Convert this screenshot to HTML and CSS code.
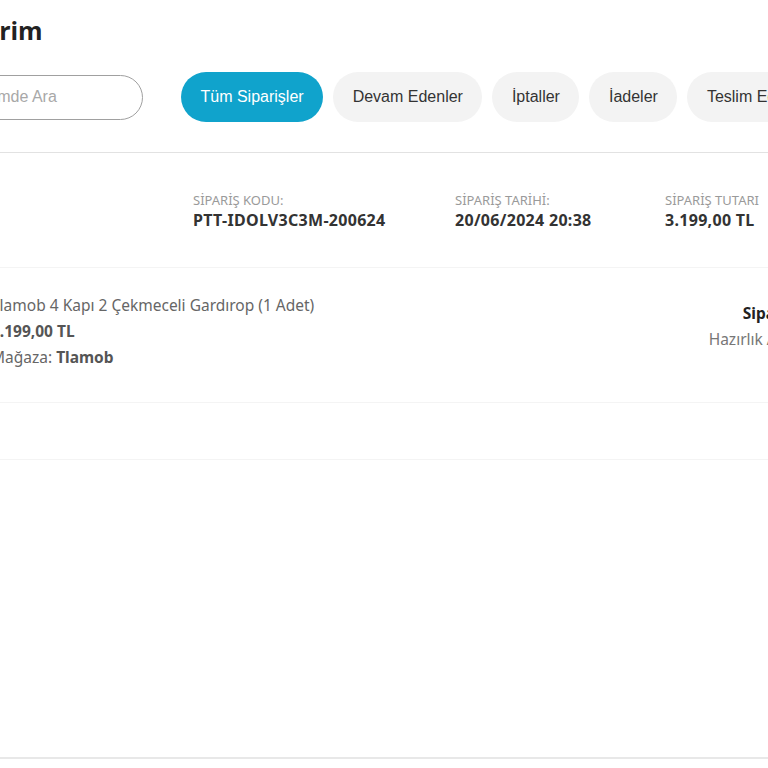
FILE: index.html
```html
<!DOCTYPE html>
<html lang="tr">
<head>
    <meta charset="UTF-8">
    <meta name="viewport" content="width=device-width, initial-scale=1.0">
    <title>Siparişlerim</title>
    <link rel="stylesheet" href="styles.css">
</head>
<body>
    <div class="page">
        <h1 class="page-title">Siparişlerim</h1>

        <div class="toolbar">
            <input class="search" type="text" placeholder="Siparişlerimde Ara">
            <div class="tabs">
                <button class="tab tab-active">Tüm Siparişler</button>
                <button class="tab">Devam Edenler</button>
                <button class="tab">İptaller</button>
                <button class="tab">İadeler</button>
                <button class="tab">Teslim Edilenler</button>
            </div>
        </div>

        <div class="order">
            <div class="order-head">
                <div class="order-field field-code">
                    <div class="order-label">Sipariş Kodu:</div>
                    <div class="order-value">PTT-IDOLV3C3M-200624</div>
                </div>
                <div class="order-field field-date">
                    <div class="order-label">Sipariş Tarihi:</div>
                    <div class="order-value">20/06/2024 20:38</div>
                </div>
                <div class="order-field">
                    <div class="order-label">Sipariş Tutarı</div>
                    <div class="order-value">3.199,00 TL</div>
                </div>
            </div>

            <div class="order-item">
                <div class="item-info">
                    <div class="item-name">Tlamob 4 Kapı 2 Çekmeceli Gardırop (1 Adet)</div>
                    <div class="item-price">3.199,00 TL</div>
                    <div class="item-store">Mağaza: <b>Tlamob</b></div>
                </div>
                <div class="item-status">
                    <div class="status-title">Siparişiniz</div>
                    <div class="status-text">Hazırlık Aşamasında</div>
                </div>
            </div>

            <div class="order-foot"></div>
        </div>

        <div class="page-empty"></div>
    </div>
</body>
</html>
```

FILE: styles.css
```css
:root {
    --blue: #10a3cc;
    --pill: #f3f3f3;
    --text: #333333;
    --muted: #9a9a9a;
    --line: #e2e2e2;
    --line-soft: #f4f4f4;
}

* {
    margin: 0;
    padding: 0;
    box-sizing: border-box;
}

body {
    background: #ffffff;
    overflow: hidden;
    font-family: 'Liberation Sans', Arial, sans-serif;
    color: var(--text);
}

/* the page is wider than the window, it starts left of the view */
.page {
    width: 1100px;
    margin-left: -98px;
}

.page-title {
    font-family: 'Open Sans', sans-serif;
    font-size: 25px;
    font-weight: 700;
    line-height: 31px;
    color: #222222;
    margin: 15px 0 0 -9px;
}

.toolbar {
    display: flex;
    align-items: center;
    gap: 38px;
    margin-top: 26px;
    padding-bottom: 30px;
    border-bottom: 1px solid var(--line);
}

.search {
    width: 241px;
    height: 45px;
    border: 1px solid #a0a0a0;
    border-radius: 23px;
    padding: 0 24px;
    font-family: 'Liberation Sans', Arial, sans-serif;
    font-size: 16px;
    color: var(--text);
    background: #fff;
    outline: none;
}

.search::placeholder {
    color: #a8a8a8;
}

.tabs {
    display: flex;
    gap: 10px;
}

.tab {
    height: 50px;
    padding: 0 19.5px;
    border: none;
    border-radius: 25px;
    background: var(--pill);
    font-family: 'Liberation Sans', Arial, sans-serif;
    font-size: 16px;
    color: var(--text);
    white-space: nowrap;
}

.tab-active {
    background: var(--blue);
    color: #ffffff;
}

.order {
    font-family: 'Noto Sans', sans-serif;
}

.order-head {
    display: flex;
    padding: 38px 0 36px 291px;
    border-bottom: 1px solid var(--line-soft);
}

.order-field.field-code {
    width: 262px;
}

.order-field.field-date {
    width: 210px;
}

.order-label {
    font-size: 13px;
    line-height: 18px;
    text-transform: uppercase;
    color: var(--muted);
}

.order-value {
    font-size: 16px;
    line-height: 22px;
    font-weight: 700;
    letter-spacing: 0.3px;
    color: var(--text);
}

.order-item {
    display: flex;
    padding: 24px 0 32px 89px;
    border-bottom: 1px solid var(--line-soft);
}

.item-info {
    flex: 1;
    font-size: 15.5px;
    line-height: 26px;
    color: #666666;
}

.item-price {
    font-weight: 700;
    color: #555555;
}

.item-store b {
    color: #555555;
}

.item-status {
    width: 180px;
    margin-right: 130px;
    padding-top: 8px;
    text-align: center;
    font-size: 15.5px;
    line-height: 26px;
}

.status-title {
    font-weight: 700;
    color: #222222;
}

.status-text {
    color: #777777;
}

.order-foot {
    height: 57px;
    border-bottom: 1px solid var(--line-soft);
}

.page-empty {
    height: 299px;
    border-bottom: 2px solid #e8e8e8;
}
```
